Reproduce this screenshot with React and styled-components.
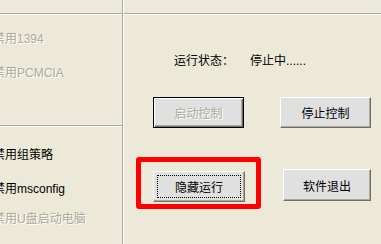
import React from "react";
import styled, { createGlobalStyle } from "styled-components";

const GlobalStyle = createGlobalStyle`
  html, body {
    margin: 0;
    padding: 0;
    overflow: hidden;
    background: #ece9d8;
  }
  body {
    font-family: "Liberation Sans", "Noto Sans CJK SC", sans-serif;
    font-size: 12px;
    color: #000;
  }
`;

const ETCH = "#aca899";

const Window = styled.div`
  display: flex;
  width: 381px;
  height: 244px;
  background: #ece9d8;
`;

const LeftCol = styled.div`
  width: 124px;
  display: flex;
  flex-direction: column;
`;

// group box whose top edge lies off screen
const TopStub = styled.div`
  width: 123px;
  height: 13px;
  box-sizing: border-box;
  border-right: 1px solid ${ETCH};
  box-shadow: 1px 0 0 #fff;
`;

const GroupBox = styled.div`
  width: 123px;
  box-sizing: border-box;
  height: ${(p) => (p.$h ? `${p.$h}px` : "auto")};
  flex: ${(p) => (p.$h ? "none" : 1)};
  border-top: 1px solid ${ETCH};
  border-right: 1px solid ${ETCH};
  box-shadow: inset 0 1px 0 #fff, 1px 0 0 #fff;
  display: flex;
  flex-direction: column;
`;

const CheckItem = styled.div`
  margin-left: -7px;
  margin-top: ${(p) => p.$top}px;
  line-height: 16px;
  height: 16px;
  white-space: nowrap;
  color: ${(p) => (p.$disabled ? ETCH : "#000")};
  text-shadow: ${(p) => (p.$disabled ? "1px 1px 0 #fff" : "none")};
`;

const RightPanel = styled.div`
  flex: 1;
  margin-top: 13px;
  border-top: 1px solid ${ETCH};
  box-shadow: inset 0 1px 0 #fff;
  display: flex;
  flex-direction: column;
`;

const StatusRow = styled.div`
  margin-top: 39px;
  padding-left: 50px;
  display: flex;
  gap: 16px;
  line-height: 16px;
  white-space: nowrap;
`;

const ButtonRow = styled.div`
  display: flex;
  align-items: flex-start;
  margin-top: ${(p) => p.$top}px;
  padding-left: ${(p) => p.$left}px;
  gap: ${(p) => p.$gap}px;
`;

const Button = styled.button`
  box-sizing: border-box;
  width: ${(p) => p.$w}px;
  height: ${(p) => p.$h}px;
  margin: 0;
  margin-top: ${(p) => p.$top || 0}px;
  padding: 0;
  font-family: "Liberation Sans", "Noto Sans CJK SC", sans-serif;
  font-size: 12px;
  background: #e0e0e0;
  color: ${(p) => (p.disabled ? ETCH : "#000")};
  text-shadow: ${(p) => (p.disabled ? "1px 1px 0 #fff" : "none")};
  border: 1px solid;
  border-color: ${(p) =>
    p.$default ? "#000" : "#fff #716f64 #716f64 #fff"};
  box-shadow: ${(p) =>
    p.$default
      ? "inset 1px 1px 0 #fff, inset -1px -1px 0 #716f64, inset -2px -2px 0 #aca899"
      : "inset -1px -1px 0 #aca899"};
  outline: ${(p) => (p.$focus ? "1px dotted #000" : "none")};
  outline-offset: -5px;
  cursor: default;
`;

const RedFrame = styled.div`
  box-sizing: border-box;
  width: 125px;
  height: 52px;
  border: 5px solid #ff0000;
  border-radius: 3px;
  padding: 9px 11px 2px 12px;
`;

export default function App() {
  return (
    <>
      <GlobalStyle />
      <Window>
        <LeftCol>
          <TopStub />
          <GroupBox $h={112}>
            <CheckItem $top={17} $disabled>禁用1394</CheckItem>
            <CheckItem $top={18} $disabled>禁用PCMCIA</CheckItem>
          </GroupBox>
          <GroupBox>
            <CheckItem $top={21}>禁用组策略</CheckItem>
            <CheckItem $top={18}>禁用msconfig</CheckItem>
            <CheckItem $top={14} $disabled>禁用U盘启动电脑</CheckItem>
          </GroupBox>
        </LeftCol>
        <RightPanel>
          <StatusRow>
            <span>运行状态：</span>
            <span>停止中......</span>
          </StatusRow>
          <ButtonRow $top={28} $left={29} $gap={36}>
            <Button $w={91} $h={31} $default disabled>
              启动控制
            </Button>
            <Button $w={91} $h={31}>停止控制</Button>
          </ButtonRow>
          <ButtonRow $top={29} $left={12} $gap={22}>
            <RedFrame>
              <Button $w={92} $h={31} $focus>
                隐藏运行
              </Button>
            </RedFrame>
            <Button $w={88} $h={32} $top={12}>
              软件退出
            </Button>
          </ButtonRow>
        </RightPanel>
      </Window>
    </>
  );
}
